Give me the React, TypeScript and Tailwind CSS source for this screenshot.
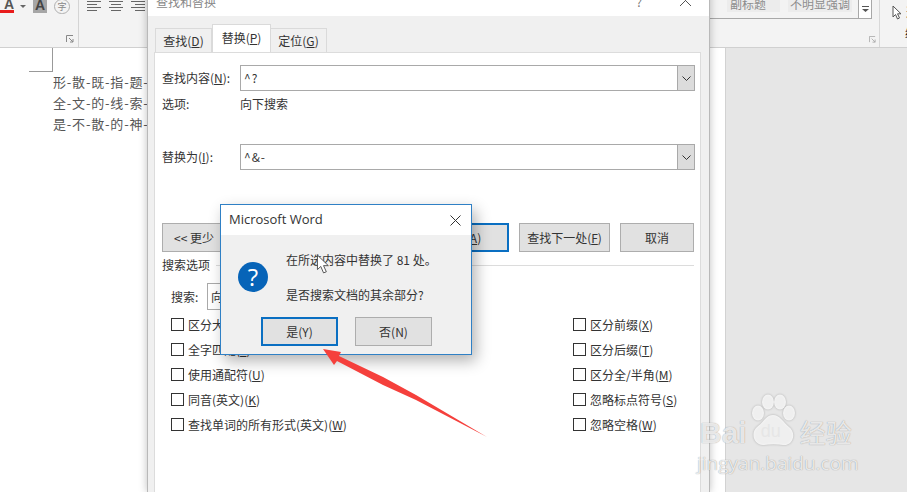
import type { ReactNode } from "react";

const cjk = "font-['Noto_Sans_CJK_SC','Noto_Sans',sans-serif]";

function Check({ label, keyName }: { label: string; keyName: string }) {
  return (
    <div className="flex items-center h-[25px] gap-[4px] text-[12px] text-[#333]">
      <span className="w-[13px] h-[13px] border border-[#333] bg-white shrink-0" />
      <span className="whitespace-nowrap">
        {label}(<u>{keyName}</u>)
      </span>
    </div>
  );
}

function Combo({ value }: { value: string }) {
  return (
    <div className="flex-1 h-[26px] flex items-center border border-[#a9a9a9] bg-white">
      <span className="flex-1 pl-[3px] text-[12px] text-[#333] tracking-[1px]">{value}</span>
      <span className="w-[17px] h-full bg-[#dcdcdc] border-l border-[#a9a9a9] flex items-center justify-center">
        <svg width="9" height="5" viewBox="0 0 9 5" fill="none" stroke="#333" strokeWidth="1">
          <path d="M0.5 0.5 L4.5 4.5 L8.5 0.5" />
        </svg>
      </span>
    </div>
  );
}

function Btn({ children, className }: { children: ReactNode; className: string }) {
  return (
    <div className={`h-[29px] flex items-center justify-center bg-[#e1e1e1] text-[12px] text-[#333] whitespace-nowrap ${className}`}>
      {children}
    </div>
  );
}

const launcher = "M0.5 7 V0.5 H7 M3 3 L7 7 M7 4 V7 H4";

function Ribbon() {
  return (
    <div className="h-[48px] bg-[#f3f3f3] border-b border-[#d0d0d0] flex shrink-0 overflow-hidden">
      <div className="w-[79px] h-full border-r border-[#d4d4d4] relative flex items-start shrink-0">
        <div className="w-[14px] h-[13px] border-b-[3px] border-[#e81b1b] text-[14px] font-bold leading-[8px] text-[#555] font-['Liberation_Sans',sans-serif] text-right">
          A
        </div>
        <span className="w-0 h-0 ml-[6px] mt-[5px] border-x-[3px] border-x-transparent border-t-[3px] border-t-[#666]" />
        <div className="w-[14px] h-[13px] ml-[7px] bg-[#a6a6a6] text-[14px] font-bold leading-[10px] text-[#444] font-['Liberation_Sans',sans-serif] text-center">
          A
        </div>
        <div className={`w-[16px] h-[15px] ml-[7px] -mt-[1px] rounded-full border border-[#b0b0b0] text-[9px] leading-[13px] text-center text-[#888] ${cjk}`}>
          字
        </div>
        <svg className="absolute right-[4px] bottom-[4px]" width="8" height="8" viewBox="0 0 8 8" fill="none" stroke="#888">
          <path d={launcher} />
        </svg>
      </div>
      <div className="pl-[8px] flex gap-[8px] items-start w-[631px] shrink-0">
        {["M0 1.5 H14 M0 4.5 H10 M0 7.5 H14 M0 10.5 H10", "M0 1.5 H14 M2 4.5 H12 M0 7.5 H14 M2 10.5 H12", "M0 1.5 H14 M4 4.5 H14 M0 7.5 H14 M4 10.5 H14"].map((d) => (
          <svg key={d} width="14" height="12" viewBox="0 0 14 12" stroke="#666" strokeWidth="1">
            <path d={d} />
          </svg>
        ))}
      </div>
      <div className={`flex items-start w-[148px] shrink-0 border-b border-[#a8a8a8] h-[19px] text-[12px] text-[#8c8c8c] ${cjk}`}>
        <span className="w-[53px] h-[12px] ml-[17px] pl-[3px] bg-[#ececec] leading-[8px] text-left">副标题</span>
        <span className="w-[64px] h-[12px] ml-[8px] bg-[#ececec] leading-[8px] text-center whitespace-nowrap">不明显强调</span>
      </div>
      <div className="w-[14px] h-[19px] border border-t-0 border-[#a8a8a8] bg-white flex items-center justify-center shrink-0">
        <svg width="7" height="6" viewBox="0 0 7 6" fill="#555">
          <path d="M0 0 H7 V1 H0 Z M0 3 H7 L3.5 6 Z" />
        </svg>
      </div>
      <div className="w-[8px] relative border-r border-[#d8d8d8] shrink-0 -ml-[1px] box-content">
        <svg className="absolute right-[3px] bottom-[4px]" width="7" height="7" viewBox="0 0 8 8" fill="none" stroke="#aaa">
          <path d={launcher} />
        </svg>
      </div>
      <div className={`flex-1 pl-[12px] text-[12px] text-[#222] overflow-hidden ${cjk}`}>
        <div className="flex items-center h-[24px] gap-[4px]">
          <svg className="shrink-0" width="10" height="15" viewBox="0 0 10 15" fill="white" stroke="#555">
            <path d="M1 1 V12 L3.5 9.5 L5.5 14 L7.5 13 L5.5 8.8 H9 Z" />
          </svg>
          <span className="whitespace-nowrap">选择</span>
        </div>
        <div className="pl-[13px] whitespace-nowrap">编辑</div>
      </div>
    </div>
  );
}

function ReplaceDialog() {
  return (
    <div className={`absolute left-[147px] top-[-14px] bottom-0 w-[563px] bg-[#f0f0f0] border-x border-[#b9b9b9] shadow-[0_0_8px_rgba(0,0,0,0.25)] flex flex-col ${cjk}`}>
      <div className="h-[30px] bg-white shrink-0 flex items-center justify-between pl-[8px] pr-[17px] text-[12px] text-[#888]">
        <span className="mt-[2px]">查找和替换</span>
        <div className="flex items-center gap-[37px]">
          <span className="text-[#777] mt-[2px]">?</span>
          <svg width="13" height="13" viewBox="0 0 13 13" stroke="#555" className="-mt-[2px]">
            <path d="M1 1 L12 12 M12 1 L1 12" />
          </svg>
        </div>
      </div>
      <div className="pt-[6px] pl-[7px] flex items-end h-[36px] shrink-0 text-[12px] text-[#333]">
        <div className="w-[57px] h-[24px] bg-[#f0f0f0] border border-b-0 border-[#dadada] flex items-center justify-center">查找(<u>D</u>)</div>
        <div className="w-[59px] h-[28px] bg-white border border-b-0 border-[#dadada] flex items-center justify-center pb-[1px]">替换(<u>P</u>)</div>
        <div className="w-[56px] h-[24px] bg-[#f0f0f0] border border-b-0 border-l-0 border-[#dadada] flex items-center justify-center">定位(<u>G</u>)</div>
      </div>
      <div className="flex-1 ml-[6px] mr-[8px] bg-white border-x border-t border-[#dcdcdc] pt-[12px] pl-[7px] pr-[5px] text-[12px] text-[#333]">
        <div className="flex items-center">
          <span className="w-[78px] shrink-0 -mt-[1px]">查找内容(<u>N</u>):</span>
          <Combo value="^?" />
        </div>
        <div className="flex items-center h-[17px] mt-[4px]">
          <span className="w-[78px] shrink-0">选项:</span>
          <span>向下搜索</span>
        </div>
        <div className="flex items-center mt-[32px]">
          <span className="w-[78px] shrink-0 -mt-[1px]">替换为(<u>I</u>):</span>
          <Combo value="^&-" />
        </div>
        <div className="flex items-center mt-[53px]">
          <Btn className="w-[90px] border border-[#adadad] justify-start pl-[11px]">{"<< 更少"}</Btn>
          <Btn className="w-[119px] ml-[138px] border-2 border-[#0a6fc2]">全部替换(<u>A</u>)</Btn>
          <Btn className="w-[91px] ml-[10px] border border-[#adadad]">查找下一处(<u>F</u>)</Btn>
          <Btn className="w-[74px] ml-[10px] border border-[#adadad]">取消</Btn>
        </div>
        <div className="flex items-center mt-[4px] h-[18px] pr-[1px]">
          <span className="shrink-0">搜索选项</span>
          <span className="flex-1 ml-[6px] h-px bg-[#dcdcdc]" />
        </div>
        <div className="flex items-center mt-[9px] ml-[9px]">
          <span className="w-[36px] shrink-0">搜索:</span>
          <span className="w-[120px] h-[27px] border border-[#a9a9a9] pl-[3px] leading-[25px]">向下</span>
        </div>
        <div className="flex mt-[2px] ml-[9px]">
          <div className="w-[402px] flex flex-col">
            <Check label="区分大小写" keyName="H" />
            <Check label="全字匹配" keyName="Y" />
            <Check label="使用通配符" keyName="U" />
            <Check label="同音(英文)" keyName="K" />
            <Check label="查找单词的所有形式(英文)" keyName="W" />
          </div>
          <div className="flex flex-col">
            <Check label="区分前缀" keyName="X" />
            <Check label="区分后缀" keyName="T" />
            <Check label="区分全/半角" keyName="M" />
            <Check label="忽略标点符号" keyName="S" />
            <Check label="忽略空格" keyName="W" />
          </div>
        </div>
      </div>
    </div>
  );
}

function MessageBox() {
  return (
    <div className={`absolute left-[220px] top-[204px] w-[252px] h-[151px] bg-[#f0f0f0] border border-[#2f80c5] shadow-[4px_6px_14px_rgba(0,0,0,0.3)] flex flex-col ${cjk}`}>
      <div className="h-[30px] bg-white flex items-center justify-between pl-[8px] pr-[10px] shrink-0">
        <span className="text-[13px] text-[#333] font-['Open_Sans',sans-serif]">Microsoft Word</span>
        <svg width="11" height="11" viewBox="0 0 11 11" stroke="#333">
          <path d="M0.5 0.5 L10.5 10.5 M10.5 0.5 L0.5 10.5" />
        </svg>
      </div>
      <div className="flex pl-[17px] pt-[16px]">
        <div className="w-[30px] h-[30px] mt-[11px] rounded-full bg-[#0764b8] text-white text-[24px] leading-[30px] text-center font-['Open_Sans',sans-serif] shrink-0">
          ?
        </div>
        <div className="ml-[18px] text-[12px] text-[#333]">
          <div className="h-[18px] leading-[18px] whitespace-nowrap">在所选内容中替换了 81 处。</div>
          <div className="h-[18px] leading-[18px] mt-[17px] whitespace-nowrap">是否搜索文档的其余部分?</div>
        </div>
      </div>
      <div className="flex pl-[40px] gap-[17px] mt-[13px]">
        <Btn className="w-[77px] border-2 border-[#0a6fc2]">是(Y)</Btn>
        <Btn className="w-[77px] border border-[#adadad]">否(N)</Btn>
      </div>
    </div>
  );
}

function Watermark() {
  return (
    <div className="absolute left-[700px] top-[393px] text-white/80 pointer-events-none [text-shadow:0_0_1px_rgba(0,0,0,0.45)]">
      <div className="flex items-end h-[54px]">
        <span className="text-[30px] leading-[29px] font-bold font-['Liberation_Sans',sans-serif]">Bai</span>
        <div className="relative w-[46px] h-[54px] ml-[3px] shrink-0">
          <svg className="w-[46px] h-[54px] drop-shadow-[0_0_1px_rgba(0,0,0,0.3)]" viewBox="0 0 46 54" fill="currentColor">
            <ellipse cx="8" cy="20" rx="6" ry="7.5" />
            <ellipse cx="18" cy="9" rx="6" ry="7.5" />
            <ellipse cx="30" cy="9" rx="6" ry="7.5" />
            <ellipse cx="39" cy="20" rx="6" ry="7.5" />
            <path d="M23 22 C16 22 14 29 7 34 C0 40 4 53 14 52 C20 51 27 51 33 52 C43 53 47 40 39 34 C33 29 30 22 23 22 Z" />
          </svg>
          <span className="absolute left-[11px] top-[29px] text-[18px] leading-[18px] text-[#e6e6e6] font-['Liberation_Sans',sans-serif] [text-shadow:none]">du</span>
        </div>
        <span className={`text-[26px] leading-[30px] ml-[4px] whitespace-nowrap ${cjk}`}>经验</span>
      </div>
      <div className="-ml-[3px] text-[19px] leading-[20px] mt-[6px] font-['Open_Sans',sans-serif] whitespace-nowrap">jingyan.baidu.com</div>
    </div>
  );
}

export default function App() {
  return (
    <div className="relative w-[907px] h-[492px] overflow-hidden bg-[#e6e6e6] flex flex-col">
      <Ribbon />
      <div className="flex-1 flex">
        <div className={`relative w-[726px] bg-white border-r border-[#d2d2d2] pl-[53px] pt-[23px] text-[13px] tracking-[0.8px] text-[#555] ${cjk}`}>
          <div className="absolute left-[29px] top-0 w-[24px] h-[24px] border-r border-b border-[#999]" />
          <div className="h-[21px] leading-[21px]">形-散-既-指-题-</div>
          <div className="h-[21px] leading-[21px]">全-文-的-线-索-</div>
          <div className="h-[21px] leading-[21px]">是-不-散-的-神-</div>
        </div>
      </div>
      <ReplaceDialog />
      <MessageBox />
      <svg className="absolute left-[316px] top-[254px]" width="14" height="20" viewBox="0 0 12 18" fill="white" stroke="#444" strokeWidth="0.8">
        <path d="M1 1 V14 L4 11.2 L6.5 17 L9 16 L6.5 10.5 H10.8 Z" />
      </svg>
      <svg className="absolute left-0 top-0 pointer-events-none" width="907" height="492" fill="#f5403c">
        <path d="M323 349 L341 352 L339 356 L383 377 L416 395 L487 437 L416 400 L383 385 L337 361 L334 365 Z" />
      </svg>
      <Watermark />
    </div>
  );
}
